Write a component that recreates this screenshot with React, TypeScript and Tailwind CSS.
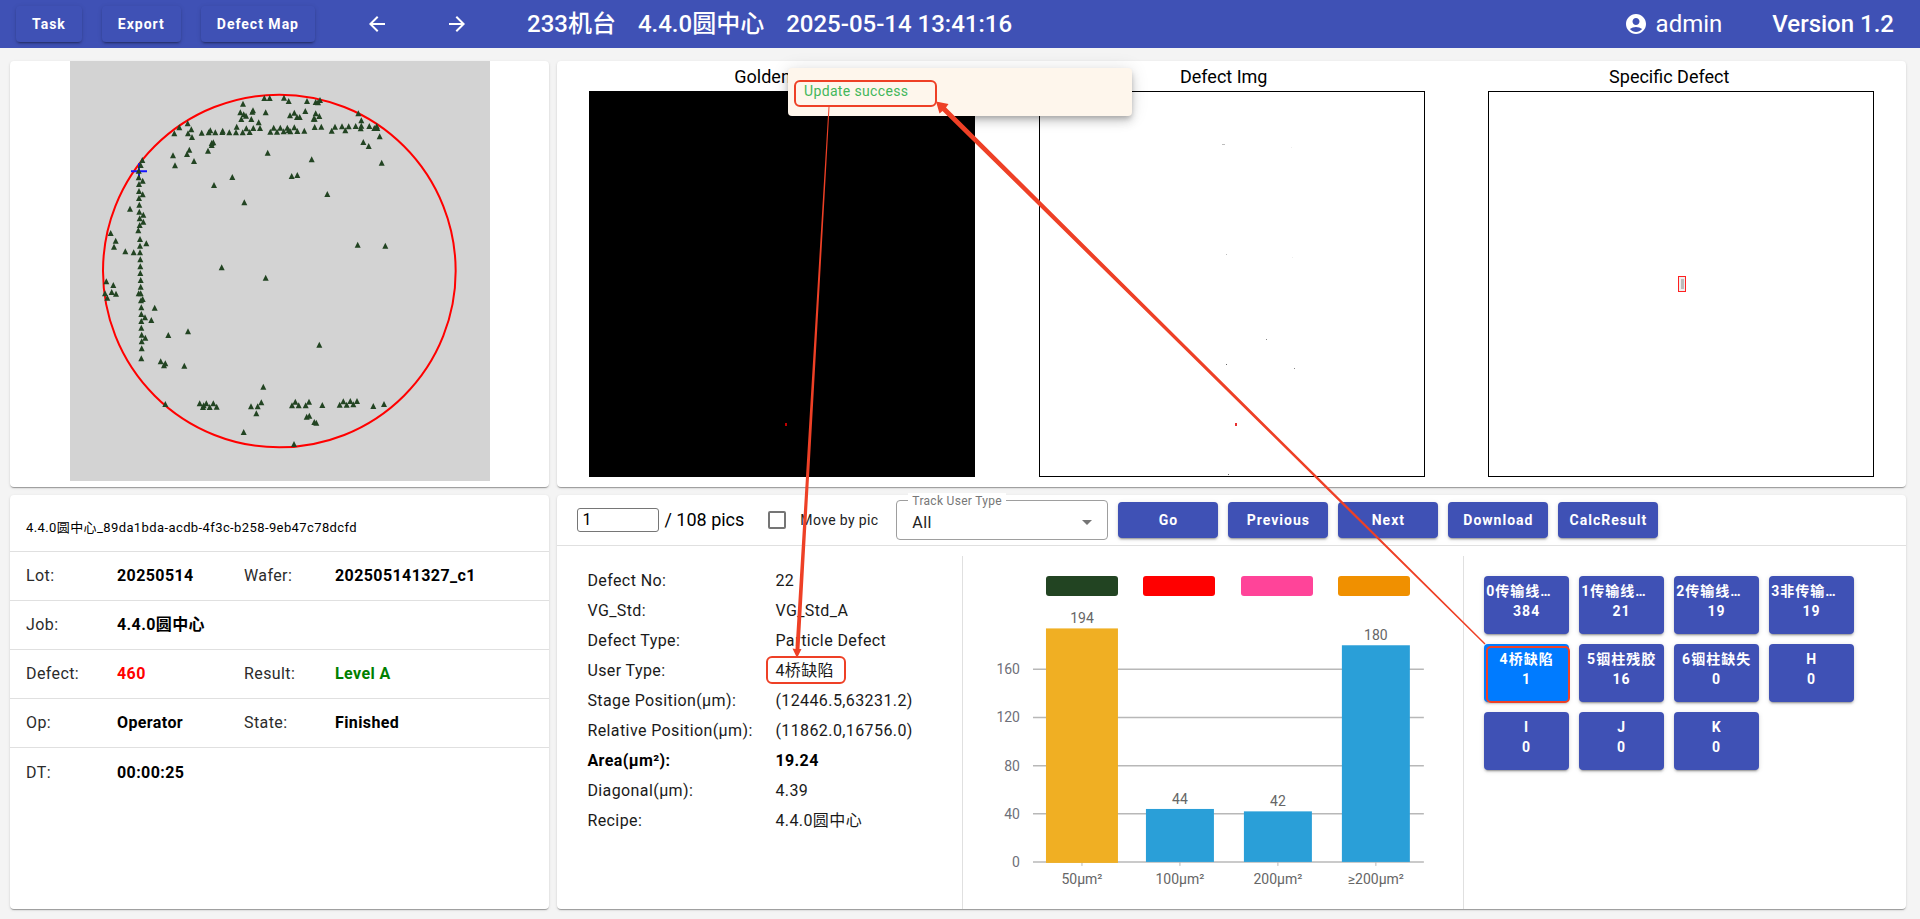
import type { ReactNode } from "react";
import { MdAccountCircle, MdArrowBack, MdArrowDropDown, MdArrowForward } from "react-icons/md";

const FONT = "font-['Roboto','Noto_Sans_CJK_SC',sans-serif]";
const CARD =
  "rounded bg-white shadow-[0_2px_1px_-1px_rgba(0,0,0,0.2),0_1px_1px_rgba(0,0,0,0.14),0_1px_3px_rgba(0,0,0,0.12)]";
const RAISED =
  "rounded text-sm font-bold text-white tracking-[1px] shadow-[0_3px_1px_-2px_rgba(0,0,0,0.2),0_2px_2px_rgba(0,0,0,0.14),0_1px_5px_rgba(0,0,0,0.12)]";

/* Wafer map defects, three units per pixel. */
const MAP_POINTS: [number, number][] = [
  [613, 145], [629, 145], [672, 144], [686, 154], [549, 162], [741, 154], [767, 157], [774, 158], [780, 151],
  [541, 188], [551, 194], [558, 198], [577, 186], [579, 182], [617, 188], [544, 208], [574, 208], [596, 218],
  [690, 197], [703, 189], [711, 202], [719, 202], [736, 184], [767, 191], [778, 199], [761, 207], [764, 207],
  [895, 191], [904, 212], [383, 221], [358, 233], [394, 239], [343, 251], [384, 251], [396, 262],
  [425, 249], [446, 248], [451, 242], [466, 248], [487, 247], [488, 243], [508, 248], [528, 248], [530, 231],
  [548, 248], [559, 236], [569, 247], [580, 235], [600, 235], [631, 246], [641, 234], [651, 246], [661, 234],
  [671, 245], [682, 234], [686, 241], [691, 245], [703, 233], [712, 244], [733, 243], [764, 232], [784, 231],
  [815, 243], [825, 231], [846, 230], [856, 242], [866, 230], [887, 229], [904, 228], [902, 236], [928, 229],
  [943, 235], [950, 229], [952, 235], [959, 260], [910, 277], [926, 289], [965, 339],
  [455, 280], [460, 278], [455, 286], [444, 303], [388, 300], [381, 313], [339, 317], [402, 334], [345, 347],
  [623, 309], [755, 329], [517, 382], [462, 406], [695, 379], [712, 376], [802, 433], [553, 458],
  [247, 331], [242, 346], [236, 363], [236, 383], [248, 393], [237, 403], [237, 424], [248, 434], [237, 445],
  [238, 465], [210, 477], [238, 486], [250, 495], [239, 506], [250, 516], [239, 526], [235, 542], [240, 568],
  [259, 581], [240, 588], [240, 608], [221, 608], [196, 605], [152, 550], [167, 573], [162, 591], [241, 629],
  [241, 650], [893, 585], [976, 588], [485, 653], [617, 684], [241, 670], [242, 691], [242, 711],
  [139, 695], [160, 706], [155, 727], [135, 731], [168, 732], [142, 744], [236, 731], [242, 731], [243, 752],
  [248, 748], [244, 773], [284, 774], [244, 793], [255, 803], [274, 811], [244, 814], [244, 834], [245, 855],
  [256, 864], [245, 875], [245, 896], [244, 926], [325, 856], [384, 845], [302, 935], [316, 941], [312, 947],
  [373, 948], [778, 885], [610, 1011], [316, 1063], [419, 1061], [431, 1067], [439, 1061], [429, 1072],
  [449, 1072], [460, 1061], [470, 1071], [573, 1070], [593, 1070], [604, 1058], [589, 1091], [551, 1147],
  [696, 1067], [706, 1056], [716, 1067], [737, 1067], [747, 1056], [787, 1066], [740, 1101], [748, 1098],
  [763, 1117], [769, 1119], [702, 1183], [839, 1065], [850, 1055], [860, 1065], [871, 1054], [880, 1064],
  [891, 1054], [940, 1069], [972, 1063],
];

function WaferMap() {
  return (
    <svg viewBox="30 33 1260 1260" className="mx-auto block w-[420px] bg-[#d3d3d3]" role="img" aria-label="Defect Map">
      <circle cx="658" cy="663" r="529" fill="none" stroke="#ff0000" strokeWidth="6" />
      <path d="M213 364H261M237 340V388" stroke="#1414ff" strokeWidth="6" />
      <g fill="#224422">
        {MAP_POINTS.map(([x, y], i) => (
          <path key={i} d={`M${x} ${y - 10}l9 18h-18z`} />
        ))}
      </g>
    </svg>
  );
}

function ImagePane({ title, pad, dark, children }: { title: string; pad: string; dark?: boolean; children: ReactNode }) {
  return (
    <figure className="flex flex-col items-center">
      <figcaption className={`flex h-[30px] w-full items-center justify-center pt-[2px] text-lg ${pad}`}>{title}</figcaption>
      <svg
        viewBox="0 0 384 384"
        className={`aspect-square w-[386px] max-w-full border border-black ${dark ? "bg-black" : "bg-white"}`}
        role="img"
        aria-label={title}
      >
        {children}
      </svg>
    </figure>
  );
}

type Cell = { label: string; value: string; color?: string };

const INFO: Cell[][] = [
  [{ label: "Lot:", value: "20250514" }, { label: "Wafer:", value: "202505141327_c1" }],
  [{ label: "Job:", value: "4.4.0圆中心" }],
  [
    { label: "Defect:", value: "460", color: "text-[#ff0000]" },
    { label: "Result:", value: "Level A", color: "text-[#008000]" },
  ],
  [{ label: "Op:", value: "Operator" }, { label: "State:", value: "Finished" }],
  [{ label: "DT:", value: "00:00:25" }],
];

const DETAILS = [
  ["Defect No:", "22"],
  ["VG_Std:", "VG_Std_A"],
  ["Defect Type:", "Particle Defect"],
  ["User Type:", "4桥缺陷"],
  ["Stage Position(µm):", "(12446.5,63231.2)"],
  ["Relative Position(µm):", "(11862.0,16756.0)"],
  ["Area(µm²):", "19.24"],
  ["Diagonal(µm):", "4.39"],
  ["Recipe:", "4.4.0圆中心"],
];

const BARS = [
  { label: "50µm²", value: 194, active: true },
  { label: "100µm²", value: 44 },
  { label: "200µm²", value: 42 },
  { label: "≥200µm²", value: 180 },
];

function SizeChart() {
  const base = 262;
  const scale = 1.204;
  return (
    <svg viewBox="0 0 500 300" className="block w-full" role="img" aria-label="Defects by area">
      {[0, 40, 80, 120, 160].map((t) => (
        <g key={t}>
          <path d={`M70 ${base - t * scale}H461`} stroke="#b8b8b8" strokeWidth="1.5" />
          <text x="57" y={base - t * scale + 5} textAnchor="end" fontSize="14" fill="#6e7079">
            {t}
          </text>
        </g>
      ))}
      {BARS.map((b, i) => {
        const cx = 119 + i * 98;
        const half = b.active ? 36 : 34;
        const top = base - b.value * scale;
        return (
          <g key={b.label}>
            <path d={`M${cx} ${base}v4`} stroke="#b8b8b8" />
            <rect
              x={cx - half}
              y={top}
              width={half * 2}
              height={base - top + (b.active ? 1 : 0)}
              fill={b.active ? "#f0af23" : "#2a9fd8"}
            />
            <text x={cx} y={top - 5} textAnchor="middle" fontSize="14" fill="#666666">
              {b.value}
            </text>
            <text x={cx} y={base + 22} textAnchor="middle" fontSize="14" fill="#666666">
              {b.label}
            </text>
          </g>
        );
      })}
    </svg>
  );
}

const TYPES = [
  { name: "0传输线…", count: 384, clipped: true },
  { name: "1传输线…", count: 21, clipped: true },
  { name: "2传输线…", count: 19, clipped: true },
  { name: "3非传输…", count: 19, clipped: true },
  { name: "4桥缺陷", count: 1, selected: true },
  { name: "5铟柱残胶", count: 16 },
  { name: "6铟柱缺失", count: 0 },
  { name: "H", count: 0 },
  { name: "I", count: 0 },
  { name: "J", count: 0 },
  { name: "K", count: 0 },
];

function Annotations() {
  return (
    <svg
      viewBox="0 0 1920 919"
      preserveAspectRatio="none"
      className="pointer-events-none absolute inset-0 z-20 h-full w-full"
      aria-hidden="true"
    >
      <g fill="none" stroke="#ee4026" strokeWidth="2">
        <rect x="795" y="81" width="141" height="25" rx="5" />
        <rect x="767" y="657" width="78" height="26" rx="5" />
        <rect x="1487" y="647" width="82" height="55" rx="4" />
      </g>
      <g fill="#ee4026">
        <path d="M828.5 107H829.5L799.5 649L801.5 649L797 658L792.5 648.5L795.5 649Z" />
        <path d="M1485.5 643.5L1484.5 644.5L942.5 111L939.5 113.5L936 101.5L948.5 104L946 107.5Z" />
      </g>
    </svg>
  );
}

export default function App() {
  return (
    <div className={`${FONT} relative flex min-h-screen flex-col bg-[#f4f4f4] text-black`}>
      <header className="flex h-12 items-center bg-[#3f51b5] pr-[26px] pl-4 text-white">
        <div className="flex gap-5">
          {["Task", "Export", "Defect Map"].map((t) => (
            <button key={t} type="button" className={`${RAISED} h-9 px-4`}>
              {t}
            </button>
          ))}
        </div>
        <nav className="ml-[38px] flex gap-8">
          <button type="button" aria-label="Back" className="flex size-12 items-center justify-center">
            <MdArrowBack size={24} />
          </button>
          <button type="button" aria-label="Forward" className="flex size-12 items-center justify-center">
            <MdArrowForward size={24} />
          </button>
        </nav>
        <h1 className="ml-[46px] flex gap-[22px] text-2xl font-medium whitespace-nowrap">
          <span>233机台</span>
          <span>4.4.0圆中心</span>
          <span>2025-05-14 13:41:16</span>
        </h1>
        <div className="ml-auto flex items-center text-2xl">
          <MdAccountCircle size={24} />
          <span className="ml-2">admin</span>
          <span className="ml-[50px] font-medium">Version 1.2</span>
        </div>
      </header>

      <main className="grid flex-1 grid-cols-[2fr_5fr] grid-rows-[auto_1fr] gap-2 pt-[13px] pr-[14px] pb-[10px] pl-[10px]">
        <section className={`${CARD} pb-[6px]`}>
          <WaferMap />
        </section>

        <section className={`${CARD} grid grid-cols-3`}>
          <ImagePane title="Golden Img" pad="pr-1" dark>
            <rect x="195" y="331" width="2" height="3" fill="#c00000" />
          </ImagePane>
          <ImagePane title="Defect Img" pad="pr-4">
            <g fill="#bdbdbd">
              <rect x="182" y="52" width="3" height="1" />
              <rect x="186" y="162" width="1" height="1" />
              <rect x="251" y="55" width="1" height="1" fill="#eeeeee" />
              <rect x="252" y="165" width="1" height="1" fill="#eeeeee" />
              <rect x="226" y="247" width="1" height="1" fill="#888888" />
              <rect x="186" y="272" width="1" height="1" fill="#666666" />
              <rect x="254" y="276" width="1" height="1" fill="#888888" />
              <rect x="188" y="382" width="1" height="1" fill="#666666" />
            </g>
            <rect x="195" y="331" width="2" height="3" fill="#e83030" />
          </ImagePane>
          <ImagePane title="Specific Defect" pad="pr-6">
            <rect x="190" y="185" width="6" height="14" fill="#eeeeee" />
            <rect x="192" y="187" width="3" height="10" fill="#bbbbbb" />
            <rect x="189.5" y="184.5" width="7" height="15" fill="none" stroke="#ff2020" />
          </ImagePane>
        </section>

        <section className={`${CARD} tracking-wide`}>
          <div className="flex h-[57px] items-center border-b border-[#e0e0e0] px-4 pt-[10px] text-[13px]">
            4.4.0圆中心_89da1bda-acdb-4f3c-b258-9eb47c78dcfd
          </div>
          <dl>
            {INFO.map((row) => (
              <div
                key={row[0].label}
                className="grid h-[49px] grid-cols-[91px_127px_91px_1fr] items-center border-b border-[#e0e0e0] px-4 last:border-b-0"
              >
                {row.map((c) => (
                  <div key={c.label} className="contents">
                    <dt className="text-[#2b2b2b]">{c.label}</dt>
                    <dd className={`font-bold whitespace-nowrap ${row.length === 1 ? "col-span-3" : ""} ${c.color ?? ""}`}>
                      {c.value}
                    </dd>
                  </div>
                ))}
              </div>
            ))}
          </dl>
        </section>

        <section className={`${CARD} flex flex-col`}>
          <form className="flex h-[51px] items-center border-b border-[#e0e0e0] pl-5">
            <label className="flex items-center gap-[5px] text-lg">
              <input
                type="text"
                defaultValue="1"
                aria-label="Picture number"
                className="h-6 w-[82px] rounded-[3px] border border-[#767676] px-1 text-base"
              />
              / 108 pics
            </label>
            <label className="ml-6 flex items-center gap-[14px] text-sm tracking-wide text-[#222222]">
              <input
                type="checkbox"
                className="size-[18px] appearance-none rounded-xs border-2 border-[#757575] checked:bg-[#3f51b5]"
              />
              Move by pic
            </label>
            <div className="relative ml-[18px] w-[212px]">
              <label
                htmlFor="track"
                className="absolute -top-[7px] left-3 bg-white px-1 text-xs leading-4 tracking-wide text-[#777777]"
              >
                Track User Type
              </label>
              <select
                id="track"
                className="h-10 w-full appearance-none rounded border border-[#9e9e9e] bg-white px-[15px] pt-[6px] text-base tracking-wide text-[#222222]"
              >
                <option>All</option>
              </select>
              <MdArrowDropDown size={24} className="pointer-events-none absolute top-[10px] right-[9px] text-[#757575]" />
            </div>
            <div className="ml-[10px] flex gap-[10px]">
              {["Go", "Previous", "Next", "Download", "CalcResult"].map((t) => (
                <button key={t} type="button" className={`${RAISED} h-9 w-[100px] bg-[#3f51b5]`}>
                  {t}
                </button>
              ))}
            </div>
          </form>

          <div className="mt-[10px] grid flex-1 grid-cols-[405fr_502fr_442fr]">
            <dl className="pt-[10px] pl-[30px] tracking-wide">
              {DETAILS.map(([k, v]) => (
                <div
                  key={k}
                  className={`grid h-[30px] grid-cols-[188px_1fr] items-center whitespace-nowrap ${k.startsWith("Area") ? "font-bold" : "text-[#1a1a1a]"}`}
                >
                  <dt>{k}</dt>
                  <dd>{v}</dd>
                </div>
              ))}
            </dl>
            <div className="border-x border-[#e0e0e0] pt-5">
              <div className="grid grid-cols-4 justify-items-center pr-[8%] pl-[14%]">
                <span className="h-5 w-[72px] rounded-[3px] bg-[#224422]" />
                <span className="h-5 w-[72px] rounded-[3px] bg-[#ff0000]" />
                <span className="h-5 w-[72px] rounded-[3px] bg-[#ff4499]" />
                <span className="h-5 w-[72px] rounded-[3px] bg-[#f09000]" />
              </div>
              <div className="pt-1">
                <SizeChart />
              </div>
            </div>
            <div className="flex flex-wrap content-start gap-[10px] pt-5 pr-10 pl-5">
              {TYPES.map((t) => (
                <button
                  key={t.name}
                  type="button"
                  aria-pressed={!!t.selected}
                  className={`${RAISED} flex h-[58px] w-[85px] flex-col px-[2px] pt-[5px] leading-5 whitespace-nowrap ${t.selected ? "bg-[#007bff]" : "bg-[#3f51b5]"}`}
                >
                  <span className={`w-full ${t.clipped ? "text-left" : "text-center"}`}>{t.name}</span>
                  <span className="w-full text-center">{t.count}</span>
                </button>
              ))}
            </div>
          </div>
        </section>
      </main>

      <div
        role="status"
        className="absolute top-[68px] left-1/2 z-10 flex h-12 w-[344px] -translate-x-1/2 items-center rounded bg-[#fef6ec] px-4 pb-[2px] text-sm tracking-wide text-[#43b75b] shadow-[0_3px_5px_-1px_rgba(0,0,0,0.2),0_6px_10px_rgba(0,0,0,0.14),0_1px_18px_rgba(0,0,0,0.12)]"
      >
        Update success
      </div>
      <Annotations />
    </div>
  );
}
